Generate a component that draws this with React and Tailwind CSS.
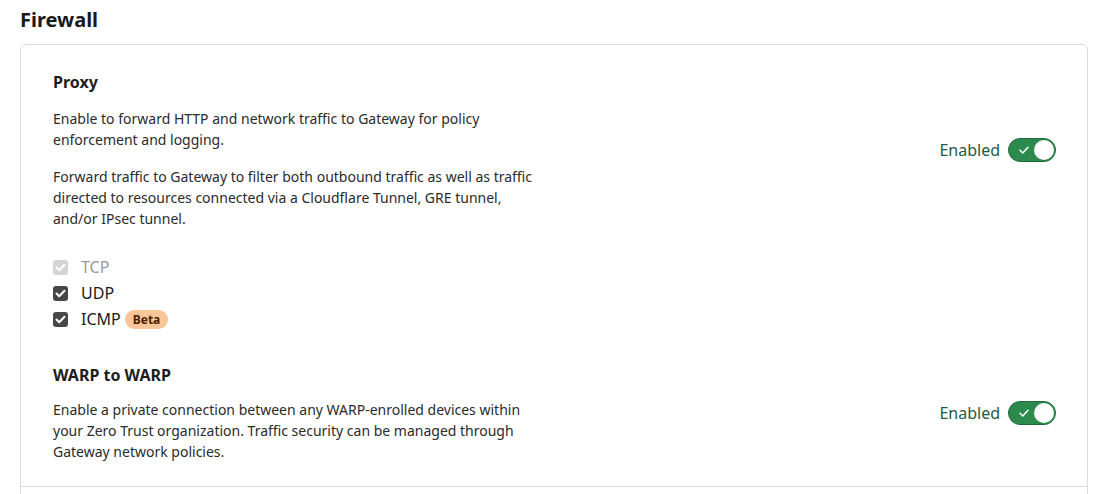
import React from "react";

function Toggle() {
  return (
    <div className="flex items-center gap-2">
      <span className="text-[16px] text-[#1f5b45]">Enabled</span>
      <div className="relative h-[24px] w-[48px] rounded-full bg-[#2d8a4e] border border-[#1f6b3b]">
        <svg className="absolute left-[10px] top-[7px]" width="10" height="8" viewBox="0 0 10 8" fill="none">
          <path d="M1 4.2 L3.8 7 L9 1.2" stroke="white" strokeWidth="1.5" strokeLinecap="round" strokeLinejoin="round" />
        </svg>
        <div className="absolute right-[1px] top-[1px] h-[20px] w-[20px] rounded-full bg-white" />
      </div>
    </div>
  );
}

function Check({ disabled }) {
  return (
    <div className={`flex h-[15px] w-[15px] items-center justify-center rounded-[3px] ${disabled ? "bg-[#d4d4d4]" : "bg-[#474747]"}`}>
      <svg width="11" height="9" viewBox="0 0 11 9" fill="none">
        <path d="M1.5 4.5 L4.2 7.2 L9.5 1.8" stroke="white" strokeWidth="2" strokeLinecap="round" strokeLinejoin="round" />
      </svg>
    </div>
  );
}

export default function App() {
  return (
    <div className="min-h-[494px] bg-white pl-[20px] pr-[24px] pt-[8px] text-[#1d1d1d]" style={{ fontFamily: '"Segoe UI", "Noto Sans", sans-serif' }}>
      <h1 className="text-[20px] font-bold leading-[24px] text-[#1a1a1a]">Firewall</h1>
      <div className="mt-[12px] rounded-t-[6px] border border-[#dcdcdc]">
        <div className="border-b border-[#dcdcdc] pl-[32px] pr-[31px] pb-[24px] pt-[26px]">
          <div className="flex items-center justify-between">
            <div className="w-[490px]">
              <h2 className="text-[16px] font-bold leading-[22px]">Proxy</h2>
              <p className="mt-[15px] text-[14px] leading-[21px] text-[#2b2b2b]">
                Enable to forward HTTP and network traffic to Gateway for policy enforcement and logging.
              </p>
              <p className="mt-[16px] text-[14px] leading-[21px] text-[#2b2b2b]">
                Forward traffic to Gateway to filter both outbound traffic as well as traffic directed to resources connected via a Cloudflare Tunnel, GRE tunnel, and/or IPsec tunnel.
              </p>
            </div>
            <Toggle />
          </div>
          <div className="mt-[27px] flex flex-col gap-[4px]">
            <div className="flex h-[22px] items-center gap-[13px]">
              <Check disabled />
              <span className="text-[16px] text-[#9a9a9a]">TCP</span>
            </div>
            <div className="flex h-[22px] items-center gap-[13px]">
              <Check />
              <span className="text-[16px] text-[#1a1a1a]">UDP</span>
            </div>
            <div className="flex h-[22px] items-center gap-[13px]">
              <Check />
              <span className="text-[16px] text-[#1a1a1a]">ICMP</span>
              <span className="-ml-[9px] rounded-full bg-[#f9c699] px-[8px] text-[12px] font-bold leading-[19px] text-[#4a2100]">Beta</span>
            </div>
          </div>
          <div className="mt-[34px] flex items-center justify-between">
            <div className="w-[490px]">
              <h2 className="text-[16px] font-bold leading-[22px]">WARP to WARP</h2>
              <p className="mt-[13px] text-[14px] leading-[21px] text-[#2b2b2b]">
                Enable a private connection between any WARP-enrolled devices within your Zero Trust organization. Traffic security can be managed through Gateway network policies.
              </p>
            </div>
            <Toggle />
          </div>
        </div>
        <div className="h-[20px]" />
      </div>
    </div>
  );
}
